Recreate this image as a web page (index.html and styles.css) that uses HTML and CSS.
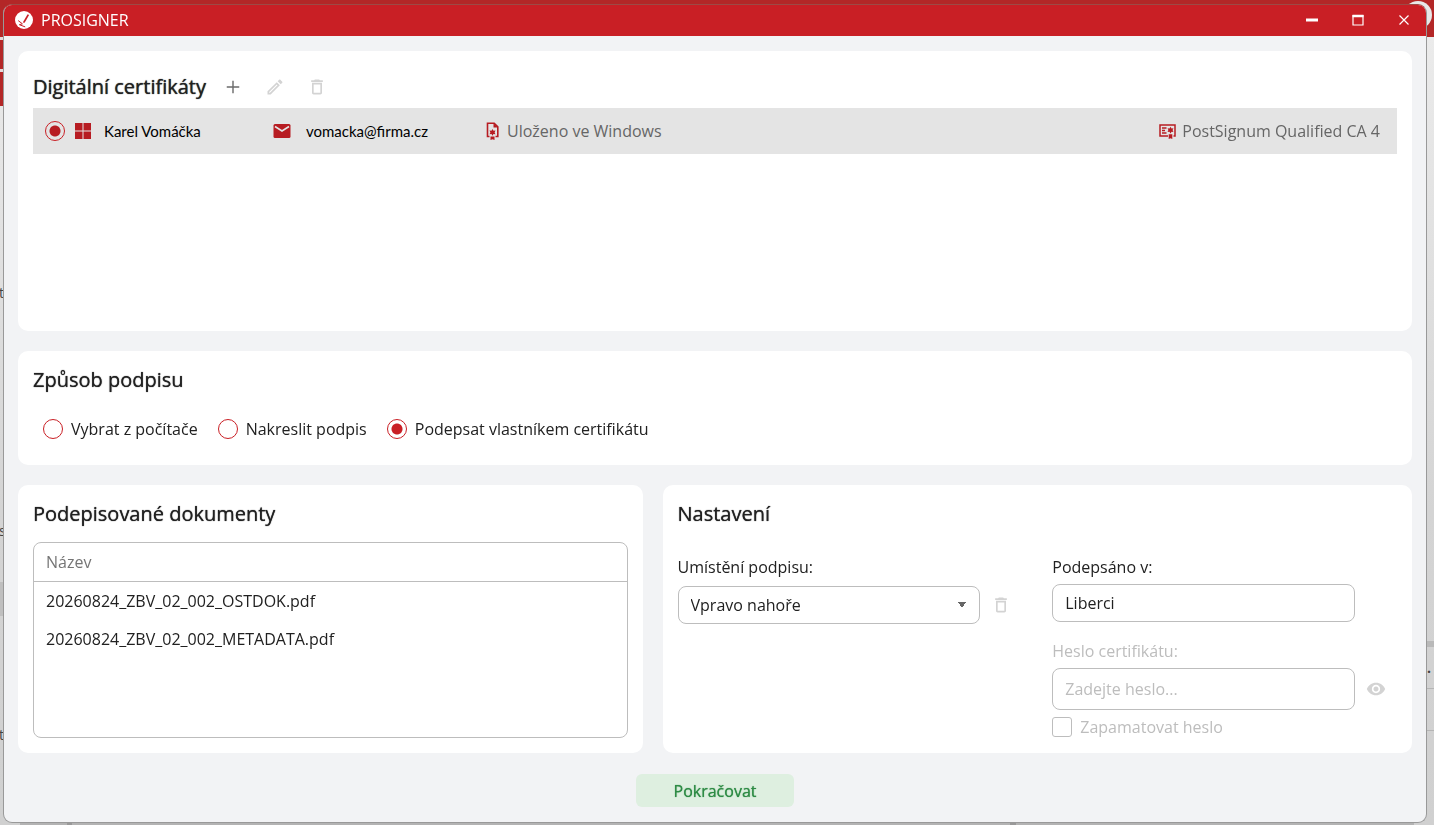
FILE: index.html
```html
<!DOCTYPE html>
<html lang="cs">
<head>
    <meta charset="UTF-8">
    <meta name="viewport" content="width=device-width, initial-scale=1.0">
    <title>PROSIGNER</title>
    <link rel="stylesheet" href="styles.css">
</head>
<body>
<div class="backdrop" aria-hidden="true">
    <div class="backdrop-bar"><span class="backdrop-avatar"></span></div>
    <div class="backdrop-content">
        <div class="strip strip-left">
            <div class="strip-tab"></div>
            <div class="strip-tab"></div>
            <div class="strip-rows">
                <span>t</span>
                <span>s</span>
                <i></i>
                <span>t</span>
            </div>
        </div>
        <div class="strip strip-right">
            <div class="strip-line"></div>
            <div class="strip-cell">...</div>
            <div class="strip-cell"></div>
        </div>
    </div>
</div>

<div class="window">
    <header class="titlebar">
        <svg class="logo" viewBox="0 0 18 18">
            <circle cx="9" cy="9" r="9" fill="#fff"/>
            <path d="M12.6 3.2l1.5.8-4.3 7.6-1.4.5-.2-1.3z" fill="#c91f25"/>
            <path d="M3.2 9.6l4.2 3.2-3 .9 5.8 2.2" fill="none" stroke="#c91f25"/>
        </svg>
        <span class="app-name">PROSIGNER</span>
        <div class="window-buttons">
            <button type="button" aria-label="Minimalizovat"><svg viewBox="0 0 12 12"><path d="M0 6h12" stroke="#fff" stroke-width="3"/></svg></button>
            <button type="button" aria-label="Maximalizovat"><svg viewBox="0 0 12 12"><path d="M1 1.500v9.500h10V1.500z" fill="none" stroke="#fff" stroke-width="1.200"/><path d="M.5 2h11" stroke="#fff" stroke-width="2.500"/></svg></button>
            <button type="button" aria-label="Zavřít"><svg viewBox="0 0 12 12"><path d="M1.500 1.500l9 9M10.500 1.500l-9 9" stroke="#fff" stroke-width="1.200"/></svg></button>
        </div>
    </header>

    <main>
        <section class="card certificates">
            <div class="card-head">
                <h2>Digitální certifikáty</h2>
                <button type="button" class="icon-btn" aria-label="Přidat"><svg viewBox="0 0 24 24"><path d="M4.500 12h15M12 4.500v15" stroke="#6b6b6b" stroke-width="1.700"/></svg></button>
                <button type="button" class="icon-btn" aria-label="Upravit" disabled><svg viewBox="0 0 24 24"><path d="M14.100 9l.9.900L5.900 19H5v-.9L14.100 9m3.600-6c-.3 0-.5.100-.7.300l-1.800 1.800 3.700 3.700L20.700 7c.4-.4.400-1 0-1.400l-2.300-2.300c-.2-.2-.5-.3-.7-.3zm-3.600 3.200L3 17.200V21h3.800L17.800 9.900 14.100 6.200z"/></svg></button>
                <button type="button" class="icon-btn" aria-label="Odstranit" disabled><svg viewBox="0 0 24 24"><path d="M6 19c0 1.100.9 2 2 2h8c1.100 0 2-.9 2-2V7H6v12zM8 9h8v10H8V9zm7.500-5l-1-1h-5l-1 1H5v2h14V4z"/></svg></button>
            </div>
            <div class="cert-row">
                <label class="cert-name">
                    <input type="radio" name="cert" checked>
                    <svg class="win-icon" viewBox="0 0 16 16"><path d="M0 0h7.500v7.500H0zM8.500 0H16v7.500H8.500zM0 8.500h7.500V16H0zM8.500 8.500H16V16H8.500z" fill="#b71c22"/></svg>
                    <span class="person">Karel Vomáčka</span>
                </label>
                <div class="cert-mail">
                    <svg viewBox="0 0 18 14"><rect x=".5" width="17" height="14" rx="1.500" fill="#b71c22"/><path d="M2 2.500l7 4.500 7-4.500" fill="none" stroke="#e4e4e4" stroke-width="1.600"/></svg>
                    <span class="person">vomacka@firma.cz</span>
                </div>
                <div class="cert-info">
                    <svg class="doc-icon" viewBox="0 0 13 18"><path d="M3.500 14.500H1.500V1.200h6.700l3.600 3.600v9.700H9.500" fill="none" stroke="#b71c22" stroke-width="1.600"/><path d="M7.500 1v4.500h4.500" fill="#b71c22"/><path d="M6.500 7l1 1.700 2-.2-.9 1.900.9 1.900-2-.2-1 1.600-1-1.600-2 .2.9-1.900-.9-1.900 2 .2z" fill="#b71c22"/><path d="M4.500 14.500h4V18l-2-.7-2 .7z" fill="#b71c22"/></svg>
                    <span>Uloženo ve Windows</span>
                </div>
                <div class="cert-info">
                    <svg class="ca-icon" viewBox="0 0 17 15"><path d="M9 12H1V1h15v11h-1.500" fill="none" stroke="#b71c22" stroke-width="1.500"/><path d="M3 4h4.500M3 6.500h3M3 9h4.500" stroke="#b71c22" stroke-width="1.400"/><path d="M11.500 2.800l1 1.600 1.900-.2-.8 1.900.8 1.900-1.900-.2-1 1.600-1-1.600-1.900.2.800-1.900-.8-1.900 1.900.2z" fill="#b71c22"/><path d="M9.700 10.300h3.600V15l-1.800-.8-1.800.8z" fill="#b71c22"/></svg>
                    <span>PostSignum Qualified CA 4</span>
                </div>
            </div>
        </section>

        <section class="card">
            <h2>Způsob podpisu</h2>
            <div class="radio-group">
                <label><input type="radio" name="method">Vybrat z počítače</label>
                <label><input type="radio" name="method">Nakreslit podpis</label>
                <label><input type="radio" name="method" checked>Podepsat vlastníkem certifikátu</label>
            </div>
        </section>

        <div class="columns">
            <section class="card documents">
                <h2>Podepisované dokumenty</h2>
                <div class="table-box">
                    <table>
                        <thead>
                            <tr><th>Název</th></tr>
                        </thead>
                        <tbody>
                            <tr><td>20260824_ZBV_02_002_OSTDOK.pdf</td></tr>
                            <tr><td>20260824_ZBV_02_002_METADATA.pdf</td></tr>
                        </tbody>
                    </table>
                </div>
            </section>

            <section class="card settings">
                <h2>Nastavení</h2>
                <div class="settings-grid">
                    <div class="field">
                        <label for="position">Umístění podpisu:</label>
                        <div class="field-row">
                            <select id="position">
                                <option>Vpravo nahoře</option>
                            </select>
                            <button type="button" class="icon-btn" aria-label="Odstranit umístění" disabled><svg viewBox="0 0 24 24"><path d="M6 19c0 1.100.9 2 2 2h8c1.100 0 2-.9 2-2V7H6v12zM8 9h8v10H8V9zm7.500-5l-1-1h-5l-1 1H5v2h14V4z"/></svg></button>
                        </div>
                    </div>
                    <div>
                        <div class="field place">
                            <label for="place">Podepsáno v:</label>
                            <input type="text" id="place" value="Liberci">
                        </div>
                        <div class="field">
                            <label for="password" class="muted">Heslo certifikátu:</label>
                            <div class="field-row">
                                <input type="password" id="password" placeholder="Zadejte heslo..." disabled>
                                <button type="button" class="icon-btn" aria-label="Zobrazit heslo" disabled><svg viewBox="0 0 24 24"><path d="M12 4.500C7 4.500 2.700 7.600 1 12c1.700 4.400 6 7.500 11 7.500s9.300-3.100 11-7.500c-1.700-4.400-6-7.500-11-7.500zM12 17c-2.800 0-5-2.200-5-5s2.200-5 5-5 5 2.200 5 5-2.200 5-5 5zm0-8c-1.700 0-3 1.300-3 3s1.300 3 3 3 3-1.300 3-3-1.300-3-3-3z"/></svg></button>
                            </div>
                        </div>
                        <label class="remember muted"><input type="checkbox" disabled>Zapamatovat heslo</label>
                    </div>
                </div>
            </section>
        </div>

        <button type="submit" class="continue">Pokračovat</button>
    </main>
</div>
</body>
</html>
```

FILE: styles.css
```css
* {
    box-sizing: border-box;
}

body {
    margin: 0;
    font-family: "Open Sans", "Noto Sans", sans-serif;
    font-size: 16px;
    line-height: 22px;
    color: #212121;
}

button, input, select {
    font: inherit;
    color: inherit;
}

/* application behind the dialog */
.backdrop {
    position: fixed;
    inset: 0;
    z-index: -1;
    display: flex;
    flex-direction: column;
    overflow: hidden;
    background: linear-gradient(#999, #999) 67px 0 / 5px 100% no-repeat,
                linear-gradient(#999, #999) 1010px 0 / 6px 100% no-repeat,
                #b3b3b3;
}

.backdrop-bar {
    height: 37px;
    background: #b32727;
    flex-shrink: 0;
}

.backdrop-avatar {
    position: absolute;
    top: 1px;
    right: 2px;
    width: 28px;
    height: 28px;
    border-radius: 50%;
    background: #e8e8e8;
}

.backdrop-content {
    flex: 1;
    display: flex;
    justify-content: space-between;
}

.strip {
    width: 20px;
    background: linear-gradient(#ebebeb, #d4d4d4 60%, #d0d0d0);
    font-size: 14px;
    color: #444;
}

.strip-tab {
    height: 32px;
    border-top: 3px solid #e6dada;
    background: #b32727;
}

.strip-tab + .strip-tab {
    height: 37px;
}

.strip-rows {
    display: grid;
    grid-template-rows: 238px 62px 142px auto;
    padding-top: 176px;
}

.strip-rows span {
    margin-left: -1px;
}

.strip-rows i {
    height: 34px;
    background: #bfbfbf;
}

.strip-right {
    display: flex;
    flex-direction: column;
    padding-top: 604px;
    text-align: right;
}

.strip-line {
    height: 6px;
    background: #b9b9b9;
}

.strip-cell {
    height: 42px;
    padding: 10px 3px;
    border-bottom: 1px solid #b5b5b5;
    font-weight: 700;
}

/* dialog window */
.window {
    display: flex;
    flex-direction: column;
    min-height: calc(100vh - 6px);
    margin: 4px 7px 2px 3px;
    background: #f2f3f5;
    border: 1px solid #999;
    border-top-color: #9c4a45;
    border-radius: 9px;
    overflow: hidden;
}

.titlebar {
    display: flex;
    align-items: center;
    height: 31px;
    padding: 0 0 1px 11px;
    background: #c91f25;
    color: #fff;
}

.logo {
    width: 18px;
    height: 18px;
}

.app-name {
    margin-left: 8px;
}

.window-buttons {
    display: flex;
    margin-left: auto;
}

.window-buttons button {
    display: flex;
    align-items: center;
    justify-content: center;
    width: 46px;
    height: 30px;
    padding: 0 0 0 2px;
    border: none;
    background: none;
}

.window-buttons svg {
    width: 12px;
    height: 12px;
}

main {
    flex: 1;
    display: flex;
    flex-direction: column;
    gap: 20px;
    padding: 15px 14px;
}

.card {
    padding: 15px;
    background: #fff;
    border-radius: 10px;
}

h2 {
    margin: 0;
    font-size: 20px;
    line-height: 28px;
    font-weight: 400;
    text-shadow: 0 0 1px currentColor;
}

.card-head {
    display: flex;
    align-items: center;
    height: 42px;
}

.card-head h2 {
    margin-right: 6px;
}

.icon-btn {
    display: flex;
    align-items: center;
    justify-content: center;
    flex-shrink: 0;
    width: 42px;
    height: 42px;
    padding: 0;
    border: none;
    background: none;
}

.icon-btn svg {
    width: 20px;
    height: 20px;
    fill: #d3d3d3;
}

/* certificates */
.certificates {
    flex: 1;
}

.cert-row {
    display: grid;
    grid-template-columns: 228px 213px 1fr auto;
    align-items: center;
    height: 46px;
    padding: 0 17px 0 12px;
    background: #e4e4e4;
    color: #666;
}

.cert-row > * {
    display: flex;
    align-items: center;
}

.win-icon {
    width: 16px;
    height: 16px;
    margin: 0 13px 0 10px;
}

.cert-mail svg {
    width: 18px;
    height: 14px;
    margin-right: 15px;
}

.person {
    font-family: Lato, sans-serif;
    font-size: 15px;
    color: #000;
}

.doc-icon {
    width: 13px;
    height: 18px;
    margin-right: 8px;
}

.ca-icon {
    width: 17px;
    height: 15px;
    margin-right: 6px;
}

/* radios and checkboxes */
input[type="radio"], input[type="checkbox"] {
    appearance: none;
    flex-shrink: 0;
    width: 20px;
    height: 20px;
    margin: 0;
    background: #fff;
}

input[type="radio"] {
    border: 1px solid #c91f25;
    border-radius: 50%;
}

input[type="radio"]:checked {
    background: radial-gradient(circle, #c91f25 5px, #fff 6px);
}

.cert-row input[type="radio"]:checked {
    background: radial-gradient(circle, #b71c22 5px, #e4e4e4 6px);
}

input[type="checkbox"] {
    border: 1px solid #bdbdbd;
    border-radius: 3px;
}

.radio-group {
    display: flex;
    align-items: center;
    gap: 20px;
    height: 42px;
    margin-top: 14px;
    padding-left: 10px;
}

.radio-group label, .remember {
    display: flex;
    align-items: center;
    gap: 8px;
}

/* bottom row */
.columns {
    display: grid;
    grid-template-columns: 5fr 6fr;
    gap: 20px;
}

.documents {
    display: flex;
    flex-direction: column;
}

.table-box {
    flex: 1;
    margin-top: 14px;
    border: 1px solid #bdbdbd;
    border-radius: 8px;
}

table {
    width: 100%;
    border-collapse: separate;
    border-spacing: 0;
}

th, td {
    height: 38px;
    padding: 0 12px;
    text-align: left;
    font-weight: 400;
}

th {
    height: 39px;
    border-bottom: 1px solid #bdbdbd;
    color: #757575;
}

.settings-grid {
    display: grid;
    grid-template-columns: 1fr 1fr;
    gap: 30px;
    margin-top: 28px;
}

.field label {
    display: block;
    margin-bottom: 6px;
}

.field-row {
    display: flex;
    align-items: center;
}

.place {
    margin-bottom: 18px;
    padding-right: 42px;
}

select, input[type="text"], input[type="password"] {
    display: block;
    width: 100%;
    min-width: 0;
    height: 38px;
    padding: 0 12px;
    border: 1px solid #bdbdbd;
    border-radius: 8px;
    background: #fff;
}

input[type="password"] {
    height: 42px;
}

input::placeholder {
    color: #bdbdbd;
    opacity: 1;
}

select {
    appearance: none;
    background: linear-gradient(to bottom right, #666 50%, transparent 51%) right 13px center / 4px 6px no-repeat,
                linear-gradient(to bottom left, #666 50%, transparent 51%) right 17px center / 4px 6px no-repeat,
                #fff;
}

.muted {
    color: #bdbdbd;
}

.remember {
    margin-top: 6px;
}

.continue {
    align-self: center;
    width: 158px;
    height: 33px;
    margin-top: 1px;
    padding: 0;
    border: none;
    border-radius: 6px;
    background: #deefe0;
    color: #2e8b45;
    text-shadow: 0 0 1px currentColor;
}
```
